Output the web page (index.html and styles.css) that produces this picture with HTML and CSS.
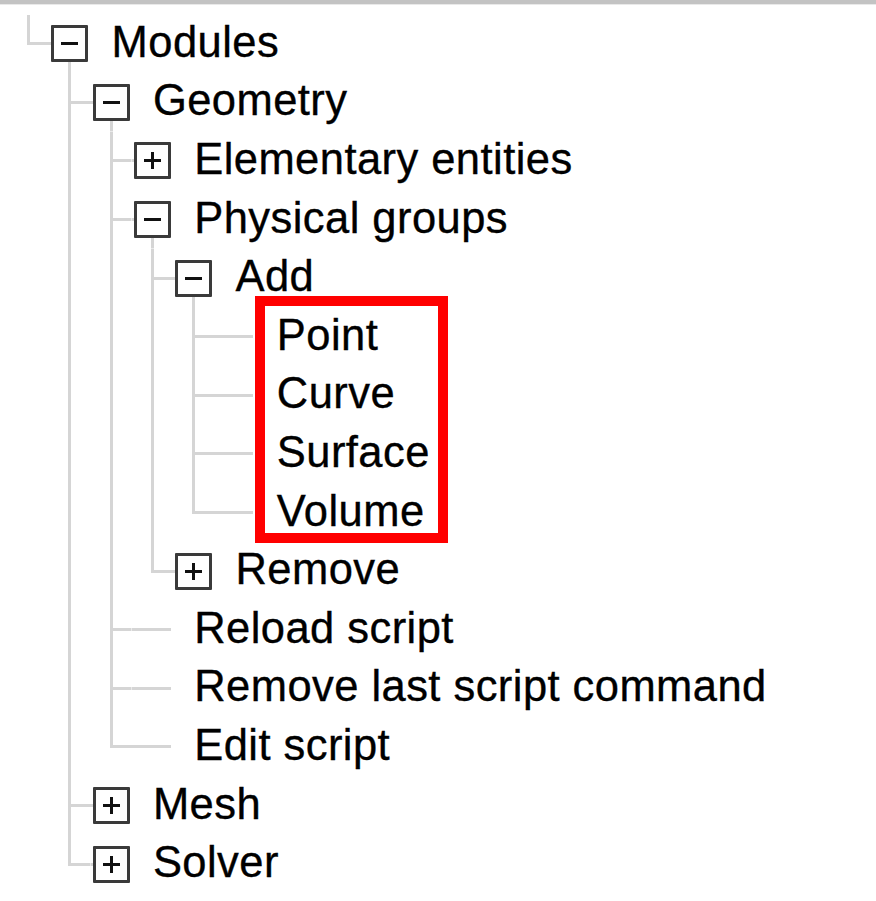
FILE: index.html
```html
<!DOCTYPE html>
<html>
<head>
<meta charset="utf-8">
<link rel="stylesheet" href="styles.css">
</head>
<body>
<div class="page">
  <div class="tree">
    <div class="row"><span class="cell l"></span><span class="cell boxcell down"><span class="box minus"></span></span><span class="label">Modules</span></div>
    <div class="row"><span class="cell"></span><span class="cell t"></span><span class="cell boxcell down"><span class="box minus"></span></span><span class="label">Geometry</span></div>
    <div class="row"><span class="cell"></span><span class="cell v"></span><span class="cell t"></span><span class="cell boxcell"><span class="box plus"></span></span><span class="label">Elementary entities</span></div>
    <div class="row"><span class="cell"></span><span class="cell v"></span><span class="cell t"></span><span class="cell boxcell down"><span class="box minus"></span></span><span class="label">Physical groups</span></div>
    <div class="row"><span class="cell"></span><span class="cell v"></span><span class="cell v"></span><span class="cell t"></span><span class="cell boxcell down"><span class="box minus"></span></span><span class="label">Add</span></div>
    <div class="row"><span class="cell"></span><span class="cell v"></span><span class="cell v"></span><span class="cell v"></span><span class="cell t"></span><span class="cell leaf"></span><span class="label">Point</span></div>
    <div class="row"><span class="cell"></span><span class="cell v"></span><span class="cell v"></span><span class="cell v"></span><span class="cell t"></span><span class="cell leaf"></span><span class="label">Curve</span></div>
    <div class="row"><span class="cell"></span><span class="cell v"></span><span class="cell v"></span><span class="cell v"></span><span class="cell t"></span><span class="cell leaf"></span><span class="label">Surface</span></div>
    <div class="row"><span class="cell"></span><span class="cell v"></span><span class="cell v"></span><span class="cell v"></span><span class="cell l"></span><span class="cell leaf"></span><span class="label">Volume</span></div>
    <div class="row"><span class="cell"></span><span class="cell v"></span><span class="cell v"></span><span class="cell l"></span><span class="cell boxcell"><span class="box plus"></span></span><span class="label">Remove</span></div>
    <div class="row"><span class="cell"></span><span class="cell v"></span><span class="cell t"></span><span class="cell leaf"></span><span class="label">Reload script</span></div>
    <div class="row"><span class="cell"></span><span class="cell v"></span><span class="cell t"></span><span class="cell leaf"></span><span class="label">Remove last script command</span></div>
    <div class="row"><span class="cell"></span><span class="cell v"></span><span class="cell l"></span><span class="cell leaf"></span><span class="label">Edit script</span></div>
    <div class="row"><span class="cell"></span><span class="cell t"></span><span class="cell boxcell"><span class="box plus"></span></span><span class="label">Mesh</span></div>
    <div class="row"><span class="cell"></span><span class="cell l"></span><span class="cell boxcell"><span class="box plus"></span></span><span class="label">Solver</span></div>
  </div>
  <div class="highlight"></div>
</div>
</body>
</html>
```
FILE: styles.css
```css
html, body {
  margin: 0;
  padding: 0;
  background: #ffffff;
}

.page {
  position: relative;
  width: 876px;
  height: 901px;
  overflow: hidden;
  border-top: 4px solid #c3c3c3;
  box-sizing: border-box;
  font-family: "Liberation Sans", Arial, sans-serif;
  color: #000;
}

.page::before {
  content: "";
  display: block;
  height: 1px;
  background: #e9e9e9;
}

.tree {
  padding: 9.5px 0 0 8px;
  display: flex;
  flex-direction: column;
}

.row {
  display: flex;
  align-items: center;
  height: 58.6px;
}

.cell {
  flex: none;
  width: 41.3px;
  height: 100%;
  display: flex;
  align-items: center;
  justify-content: center;
  background-repeat: no-repeat;
}

/* vertical guide */
.v {
  background-image: linear-gradient(#d5d5d5, #d5d5d5);
  background-size: 3px 100%;
  background-position: center top;
}

/* T junction */
.t {
  background-image: linear-gradient(#d5d5d5, #d5d5d5), linear-gradient(#d5d5d5, #d5d5d5);
  background-size: 3px 100%, 50% 3px;
  background-position: center top, right center;
}

/* L junction */
.l {
  background-image: linear-gradient(#d5d5d5, #d5d5d5), linear-gradient(#d5d5d5, #d5d5d5);
  background-size: 3px 50%, calc(50% + 1.5px) 3px;
  background-position: center top, right 50%;
}

/* cell holding expand box: line coming in from the left */
.boxcell {
  background-image: linear-gradient(#d5d5d5, #d5d5d5);
  background-size: 50% 3px;
  background-position: left center;
}

.boxcell.down {
  background-image: linear-gradient(#d5d5d5, #d5d5d5), linear-gradient(#d5d5d5, #d5d5d5);
  background-size: 50% 3px, 3px 50%;
  background-position: left center, center bottom;
}

/* leaf: line runs to the box's right edge */
.leaf {
  background-image: linear-gradient(#d5d5d5, #d5d5d5);
  background-size: 39px 3px;
  background-position: left center;
}

.box {
  width: 37px;
  height: 37px;
  box-sizing: border-box;
  border: 3px solid #3a3a3a;
  border-radius: 1px;
  background: #fff;
  display: flex;
  align-items: center;
  justify-content: center;
}

.box::before {
  content: "";
  width: 17px;
  height: 3px;
  background: #111;
}

.box.plus {
  background-image: linear-gradient(#111, #111);
  background-size: 3px 17px;
  background-position: center;
  background-repeat: no-repeat;
}

.label {
  margin-left: 21px;
  margin-bottom: 4px;
  font-size: 43.5px;
  line-height: 48px;
  letter-spacing: 0.45px;
  white-space: nowrap;
  -webkit-text-stroke: 0.35px #000;
}

.highlight {
  position: absolute;
  left: 255px;
  top: 292px;
  width: 193px;
  height: 247px;
  box-sizing: border-box;
  border: 10px solid #ff0000;
}
```
